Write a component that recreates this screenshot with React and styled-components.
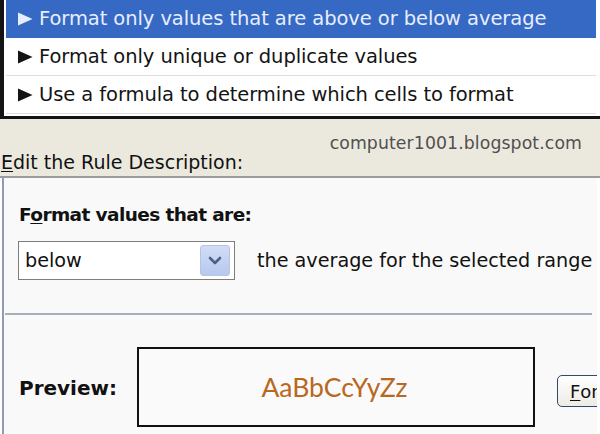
import styled, { createGlobalStyle } from "styled-components";

const GlobalStyle = createGlobalStyle`
  html, body {
    margin: 0;
    padding: 0;
    background: #ffffff;
    overflow: hidden;
  }
`;

const Page = styled.div`
  width: 600px;
  height: 434px;
  display: flex;
  flex-direction: column;
  font-family: "DejaVu Sans", Verdana, sans-serif;
  color: #111;
  overflow: hidden;
`;

// rule type list at the top
const RuleList = styled.div`
  height: 116px;
  border-left: 4px solid #141414;
  border-bottom: 3px solid #141414;
  padding-left: 2px;
  padding-right: 4px;
  background: #fff;
`;

const RuleRow = styled.div`
  height: 37px;
  display: flex;
  align-items: center;
  gap: 6px;
  padding-left: 11px;
  font-size: 19.5px;
  letter-spacing: -0.08px;
  background: ${(p) => (p.$selected ? "#3669c3" : "#fff")};
  color: ${(p) => (p.$selected ? "#e6eeff" : "#141414")};
  border-bottom: 1px solid ${(p) => (p.$selected ? "#3669c3" : "#dedede")};

  svg {
    flex-shrink: 0;
  }
`;

// grey band with the dialog label
const Band = styled.div`
  height: 57px;
  background: #ebe9de;
  border-bottom: 2px solid #9c9c9c;
  display: flex;
  flex-direction: column;
  justify-content: flex-end;
  position: relative;
`;

const Watermark = styled.div`
  position: absolute;
  right: 18px;
  top: 14px;
  font-size: 17.3px;
  color: #505050;
  letter-spacing: 0.1px;
`;

const BandLabel = styled.div`
  font-size: 19px;
  padding-left: 1px;
  padding-bottom: 3px;
`;

const Ul = styled.span`
  text-decoration: underline;
  text-underline-offset: 2px;
`;

// description panel
const Panel = styled.div`
  flex: 1;
  margin-left: 2px;
  margin-right: 3px;
  border-left: 2px solid #8d9cb2;
  background: #f9f9f9;
  display: flex;
  flex-direction: column;
  overflow: hidden;
`;

const Heading = styled.div`
  font-weight: bold;
  font-size: 18.5px;
  letter-spacing: -0.6px;
  padding: 26px 0 0 15px;
`;

const SelectRow = styled.div`
  display: flex;
  align-items: center;
  gap: 22px;
  padding: 16px 0 0 14px;
  font-size: 19.2px;
`;

const Select = styled.div`
  width: 217px;
  height: 39px;
  flex-shrink: 0;
  border: 1px solid #7d7d7d;
  background: #fff;
  display: flex;
  align-items: center;
  justify-content: space-between;
  padding: 0 4px 0 6px;
  box-sizing: border-box;
`;

const DropButton = styled.div`
  width: 28px;
  height: 29px;
  border-radius: 3px;
  background: linear-gradient(#d2dcf6, #b7c8ef);
  border: 1px solid #b4c3e6;
  display: flex;
  align-items: center;
  justify-content: center;
`;

const Divider = styled.div`
  height: 2px;
  flex-shrink: 0;
  background: #a7afbd;
  margin: 33px 5px 0 1px;
`;

const PreviewRow = styled.div`
  display: flex;
  align-items: center;
  padding: 32px 0 0 15px;
`;

const PreviewLabel = styled.div`
  font-weight: bold;
  font-size: 20px;
  width: 118px;
  flex-shrink: 0;
  padding-top: 2px;
`;

const PreviewBox = styled.div`
  width: 398px;
  height: 80px;
  flex-shrink: 0;
  box-sizing: border-box;
  border: 2px solid #111;
  background: #fafafa;
  display: flex;
  align-items: center;
  justify-content: center;
  font-family: Lato, "Open Sans", sans-serif;
  font-size: 26.5px;
  color: #b9681f;
  padding-right: 3px;
`;

const FormatButton = styled.div`
  margin-left: 22px;
  margin-top: 8px;
  width: 80px;
  height: 32px;
  flex-shrink: 0;
  box-sizing: border-box;
  border: 1px solid #2f4a6b;
  border-radius: 5px;
  background: linear-gradient(#ffffff, #ecebe5);
  display: flex;
  align-items: center;
  padding-left: 12px;
  font-size: 18px;
`;

function Triangle() {
  return (
    <svg width="16" height="14" viewBox="0 0 16 14">
      <path d="M1 0.5 L15.5 7 L1 13.5 Z" fill="currentColor" />
    </svg>
  );
}

function Chevron() {
  return (
    <svg width="14" height="10" viewBox="0 0 14 10">
      <path
        d="M2 2 L7 7 L12 2"
        fill="none"
        stroke="#4d6185"
        strokeWidth="2.6"
        strokeLinecap="round"
        strokeLinejoin="round"
      />
    </svg>
  );
}

const rules = [
  "Format only values that are above or below average",
  "Format only unique or duplicate values",
  "Use a formula to determine which cells to format",
];

export default function App() {
  return (
    <Page>
      <GlobalStyle />
      <RuleList>
        {rules.map((r, i) => (
          <RuleRow key={r} $selected={i === 0}>
            <Triangle />
            {r}
          </RuleRow>
        ))}
      </RuleList>
      <Band>
        <Watermark>computer1001.blogspot.com</Watermark>
        <BandLabel>
          <Ul>E</Ul>dit the Rule Description:
        </BandLabel>
      </Band>
      <Panel>
        <Heading>
          F<Ul>o</Ul>rmat values that are:
        </Heading>
        <SelectRow>
          <Select>
            below
            <DropButton>
              <Chevron />
            </DropButton>
          </Select>
          the average for the selected range
        </SelectRow>
        <Divider />
        <PreviewRow>
          <PreviewLabel>Preview:</PreviewLabel>
          <PreviewBox>AaBbCcYyZz</PreviewBox>
          <FormatButton>
            <Ul>F</Ul>ormat...
          </FormatButton>
        </PreviewRow>
      </Panel>
    </Page>
  );
}
